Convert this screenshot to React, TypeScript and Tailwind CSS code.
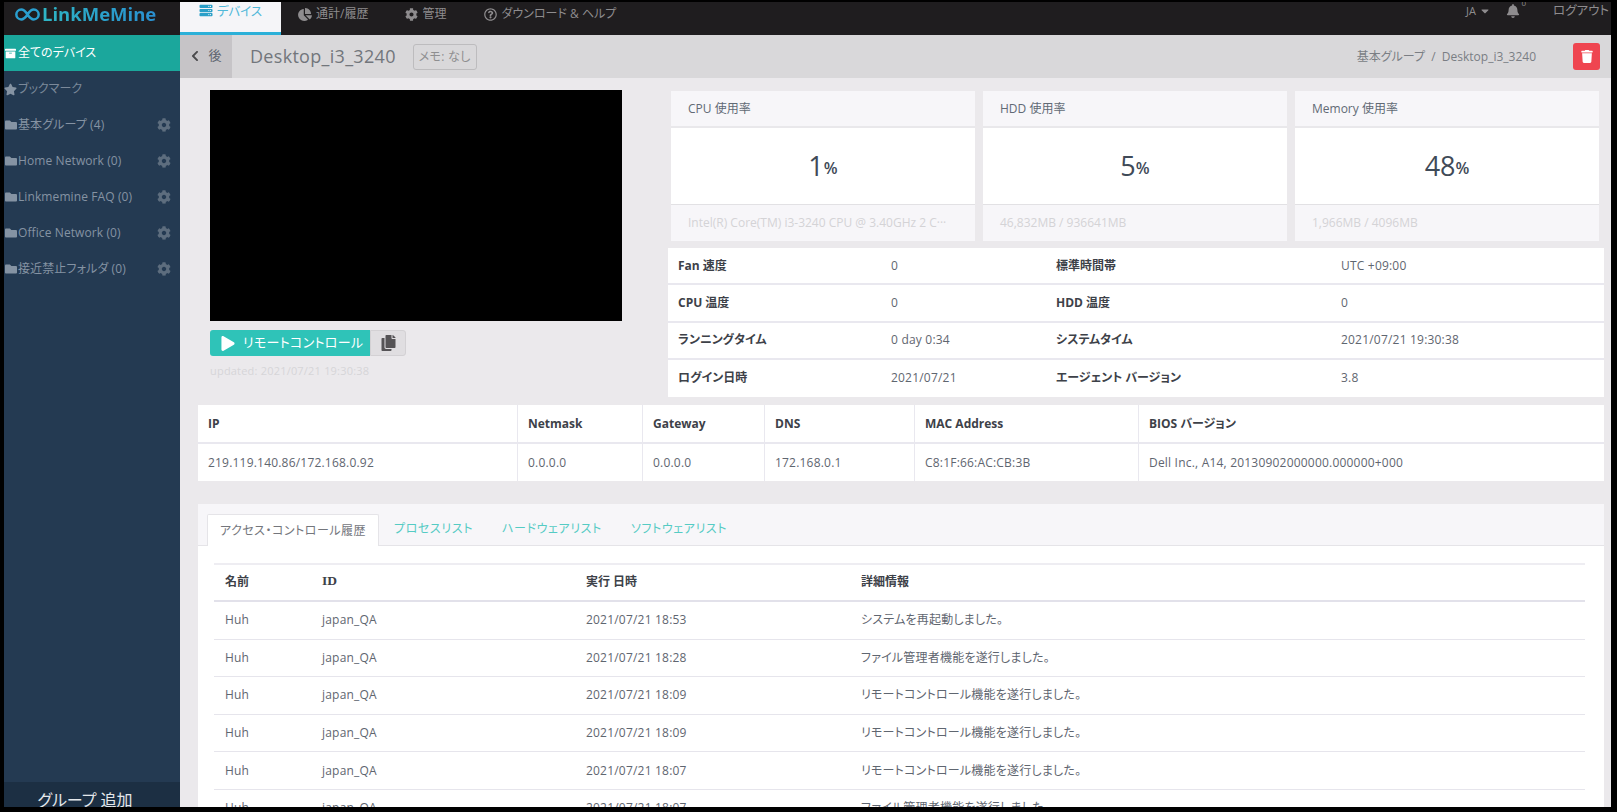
import React from "react";
import { FaServer, FaChartPie, FaCog, FaRegQuestionCircle, FaBell, FaCaretDown, FaTrash, FaPlay, FaCopy, FaFolder, FaStar, FaChevronLeft, FaArchive } from "react-icons/fa";

const groups = ["基本グループ (4)", "Home Network (0)", "Linkmemine FAQ (0)", "Office Network (0)", "接近禁止フォルダ (0)"];
const stats = [
  { t: "CPU 使用率", v: "1", f: "Intel(R) Core(TM) i3-3240 CPU @ 3.40GHz 2 C···" },
  { t: "HDD 使用率", v: "5", f: "46,832MB / 936641MB" },
  { t: "Memory 使用率", v: "48", f: "1,966MB / 4096MB" },
];
const info = [
  ["Fan 速度", "0", "標準時間帯", "UTC +09:00"],
  ["CPU 温度", "0", "HDD 温度", "0"],
  ["ランニングタイム", "0 day 0:34", "システムタイム", "2021/07/21 19:30:38"],
  ["ログイン日時", "2021/07/21", "エージェント バージョン", "3.8"],
];
const net = [
  ["IP", "219.119.140.86/172.168.0.92", "w-[319px]"],
  ["Netmask", "0.0.0.0", "w-[125px]"],
  ["Gateway", "0.0.0.0", "w-[122px]"],
  ["DNS", "172.168.0.1", "w-[150px]"],
  ["MAC Address", "C8:1F:66:AC:CB:3B", "w-[224px]"],
  ["BIOS バージョン", "Dell Inc., A14, 20130902000000.000000+000", "flex-1"],
];
const logs = [
  ["2021/07/21 18:53", "システムを再起動しました。"],
  ["2021/07/21 18:28", "ファイル管理者機能を遂行しました。"],
  ["2021/07/21 18:09", "リモートコントロール機能を遂行しました。"],
  ["2021/07/21 18:09", "リモートコントロール機能を遂行しました。"],
  ["2021/07/21 18:07", "リモートコントロール機能を遂行しました。"],
  ["2021/07/21 18:07", "ファイル管理者機能を遂行しました。"],
];
const font = "font-['Open_Sans','Noto_Sans_CJK_JP',sans-serif] [font-feature-settings:'palt']";

export default function App() {
  return (
    <div className={`h-[812px] w-[1617px] overflow-hidden bg-black pb-[5px] pl-1 pr-[6px] pt-[2px] ${font} text-[12px] text-[#5f6670]`}>
      <div className="flex h-full w-full flex-col overflow-hidden bg-[#ebe9ec]">
        <header className="flex h-[33px] shrink-0 items-start bg-[#1f1d1f]">
          <div className="flex h-full w-[176px] items-center gap-[2px] pb-[9px] pl-[11px]">
            <svg width="25" height="13" viewBox="0 0 28 14" fill="none" stroke="#2a9fd0" strokeWidth="2.8">
              <path d="M14 7c-2-3-4-5.500-7-5.500a5.500 5.500 0 0 0 0 11c3 0 5-2.500 7-5.500s4-5.500 7-5.500a5.500 5.500 0 0 1 0 11c-3 0-5-2.500-7-5.500z" />
            </svg>
            <span className="bg-gradient-to-r from-[#2fb5c4] to-[#2a8fd0] bg-clip-text text-[18.500px] font-bold leading-[24px] text-transparent">LinkMeMine</span>
          </div>
          <nav className="flex h-full">
            <div className="flex h-full w-[101px] justify-center gap-[4px] border-b-[3px] border-[#2bb0d8] bg-[#f5f5f8] pt-[1px] text-[12.500px] leading-[17px] text-[#4fb8d8]">
              <FaServer className="mt-[1px] h-[13px] w-[14px] text-[#2a9fc8]" />
              デバイス
            </div>
            <div className="flex items-center gap-[4px] pb-[9px] pl-[17px] text-[#8e8c8e]"><FaChartPie className="h-[13px] w-[14px]" />通計/履歴</div>
            <div className="flex items-center gap-[4px] pb-[9px] pl-[37px] text-[#8e8c8e]"><FaCog className="h-[13px] w-[13px]" />管理</div>
            <div className="flex items-center gap-[4px] pb-[9px] pl-[38px] text-[#8e8c8e]"><FaRegQuestionCircle className="h-[13px] w-[13px]" />ダウンロード &amp; ヘルプ</div>
          </nav>
          <div className="ml-auto flex items-center pr-[2px] pt-[1px] text-[11px] text-[#8e8c8e]">
            <span className="flex items-center gap-[3px]">JA<FaCaretDown className="h-[12px] w-[12px]" /></span>
            <span className="relative ml-[15px]"><FaBell className="h-[14px] w-[14px]" /><span className="absolute -right-[6px] -top-[6px] text-[8px] leading-[10px]">0</span></span>
            <span className="ml-[33px] text-[12.500px] leading-[16px]">ログアウト</span>
          </div>
        </header>
        <div className="flex min-h-0 flex-1">
          <aside className="flex w-[176px] shrink-0 flex-col bg-[#243a52] text-[12px] text-[#8593a3]">
            <div className="flex h-[36px] items-center gap-[2px] bg-[#1ba79c] pl-[1px] text-white"><FaArchive className="h-[11px] w-[11px]" />全てのデバイス</div>
            <div className="flex h-[36px] items-center gap-[1px] pl-0"><FaStar className="h-[13px] w-[13px]" /><span className="text-[#7b899a]">ブックマーク</span></div>
            {groups.map((g) => (
              <div key={g} className="flex h-[36px] items-center gap-[1px] pl-[1px]">
                <FaFolder className="h-[12px] w-[12px]" />
                <span className="tracking-[0.1px]">{g}</span>
                <FaCog className="ml-auto mr-[9px] h-[14px] w-[14px] text-[#5d6d7e]" />
              </div>
            ))}
            <div className="mt-auto flex h-[25px] items-center justify-center bg-[#1c2f43] pr-[14px] pt-[10px] text-[16px] text-[#e4e7ea]">グループ 追加</div>
          </aside>
          <main className="flex min-w-0 flex-1 flex-col">
            <div className="flex h-[43px] shrink-0 items-center bg-[#d9d8da] pr-[11px]">
              <div className="flex h-full w-[52px] items-center justify-center gap-[8px] bg-[#c6c4c7] pb-[2px] text-[13px]"><FaChevronLeft className="h-[12px] w-[10px] text-[#4a4a4c]" />後</div>
              <span className="ml-[18px] text-[18px] tracking-[0.3px] text-[#72767c]">Desktop_i3_3240</span>
              <span className="ml-[17px] whitespace-nowrap rounded-[3px] border border-[#bdbcbe] px-[5px] py-[3px] text-[12px] leading-[18px] tracking-[0.3px] text-[#8e8e90]">メモ: なし</span>
              <span className="ml-auto text-[12px] text-[#7a7e84]">基本グループ &nbsp;/&nbsp; Desktop_i3_3240</span>
              <span className="ml-[37px] flex h-[27px] w-[27px] items-center justify-center rounded-[3px] bg-[#ef4550]"><FaTrash className="h-[13px] w-[12px] text-white" /></span>
            </div>
            <div className="flex min-h-0 flex-1 flex-col pl-[18px] pr-[7px]">
              <div className="flex h-[319px] shrink-0">
                <div className="w-[470px] shrink-0 pl-[12px] pt-[12px]">
                  <div className="h-[231px] w-[412px] bg-black" />
                  <div className="mt-[9px] flex h-[26px]">
                    <div className="flex w-[160px] items-center gap-[8px] whitespace-nowrap rounded-l-[3px] bg-[#2fc3b8] pl-[11px] text-[13px] tracking-[0.3px] text-white"><FaPlay className="h-[15px] w-[14px]" />リモートコントロール</div>
                    <div className="flex w-[36px] items-center justify-center rounded-r-[3px] border border-[#d3d1d4] bg-[#e0dee1]"><FaCopy className="h-[16px] w-[15px] text-[#555356]" /></div>
                  </div>
                  <div className="mt-[7px] text-[11px] tracking-[0.2px] text-[#d6d5d8]">updated: 2021/07/21 19:30:38</div>
                </div>
                <div className="flex flex-1 flex-col pt-[13px]">
                  <div className="flex h-[150px] gap-[8px] pl-[3px]">
                    {stats.map((s) => (
                      <div key={s.t} className="flex w-[304px] flex-col bg-white">
                        <div className="flex h-[37px] items-center border-b-2 border-[#e9e8eb] bg-[#f7f6f9] pl-[17px] text-[#616a75]">{s.t}</div>
                        <div className="flex h-[76px] items-center justify-center text-[#3f4a57]">
                          <span className="text-[27px]">{s.v}</span><span className="mt-[4px] text-[16px] font-semibold">%</span>
                        </div>
                        <div className="flex h-[37px] items-center truncate border-t border-[#e2e1e4] bg-[#f7f6f9] pl-[17px] text-[#d4d3d6]">{s.f}</div>
                      </div>
                    ))}
                  </div>
                  <div className="mt-[7px] grid grid-cols-[213px_165px_285px_1fr] bg-white">
                    {info.map((r, i) => (
                      <React.Fragment key={i}>
                        {r.map((c, j) => (
                          <div key={j} className={`flex h-[37.250px] items-center pl-[10px] ${i < 3 ? "border-b-2 border-[#e9e8ef]" : ""} ${j % 2 === 0 ? "font-bold text-[#3d4148]" : "tracking-[0.2px] text-[#5f6670]"}`}>{c}</div>
                        ))}
                      </React.Fragment>
                    ))}
                  </div>
                </div>
              </div>
              <div className="mt-[8px] flex h-[76px] shrink-0 bg-white">
                {net.map((n, i) => (
                  <div key={n[0]} className={`${n[2]} ${i > 0 ? "border-l border-[#e9e8ef]" : ""} flex flex-col`}>
                    <div className="flex h-[39px] items-center border-b-2 border-[#e9e8ef] pl-[10px] font-bold text-[#3d4148]">{n[0]}</div>
                    <div className="flex h-[37px] items-center pl-[10px] tracking-[0.2px]">{n[1]}</div>
                  </div>
                ))}
              </div>
              <div className="mt-[23px] flex min-h-0 flex-1 flex-col bg-white">
                <div className="flex h-[42px] shrink-0 items-end border-b border-[#e5e4e8] bg-[#f7f6f9] pl-[9px]">
                  <div className="-mb-px flex h-[32px] w-[172px] items-center justify-center rounded-t-[2px] border border-b-0 border-[#e5e4e8] bg-white tracking-[0.5px] text-[#74767c]">アクセス・コントロール履歴</div>
                  <div className="flex h-[32px] items-center pl-[15px] tracking-[0.6px] text-[#55cbc4]">プロセスリスト</div>
                  <div className="flex h-[32px] items-center pl-[29px] tracking-[0.6px] text-[#55cbc4]">ハードウェアリスト</div>
                  <div className="flex h-[32px] items-center pl-[29px] tracking-[0.6px] text-[#55cbc4]">ソフトウェアリスト</div>
                </div>
                <div className="ml-[16px] mr-[19px] mt-[17px] border-t-2 border-[#eeedf2]">
                  <div className="grid h-[37px] grid-cols-[97px_264px_275px_1fr] items-center border-b-2 border-[#e2e1ea] pb-[2px] pl-[11px] font-bold text-[#3d4148]">
                    <span>名前</span><span className="font-['Liberation_Serif','Noto_Sans_CJK_JP',serif] text-[13.500px]">ID</span><span>実行 日時</span><span>詳細情報</span>
                  </div>
                  {logs.map((l, i) => (
                    <div key={i} className="grid h-[37.600px] grid-cols-[97px_264px_275px_1fr] items-center border-b border-[#e6e5ec] pl-[11px] tracking-[0.2px]">
                      <span>Huh</span><span>japan_QA</span><span>{l[0]}</span><span>{l[1]}</span>
                    </div>
                  ))}
                </div>
              </div>
            </div>
          </main>
        </div>
      </div>
    </div>
  );
}
